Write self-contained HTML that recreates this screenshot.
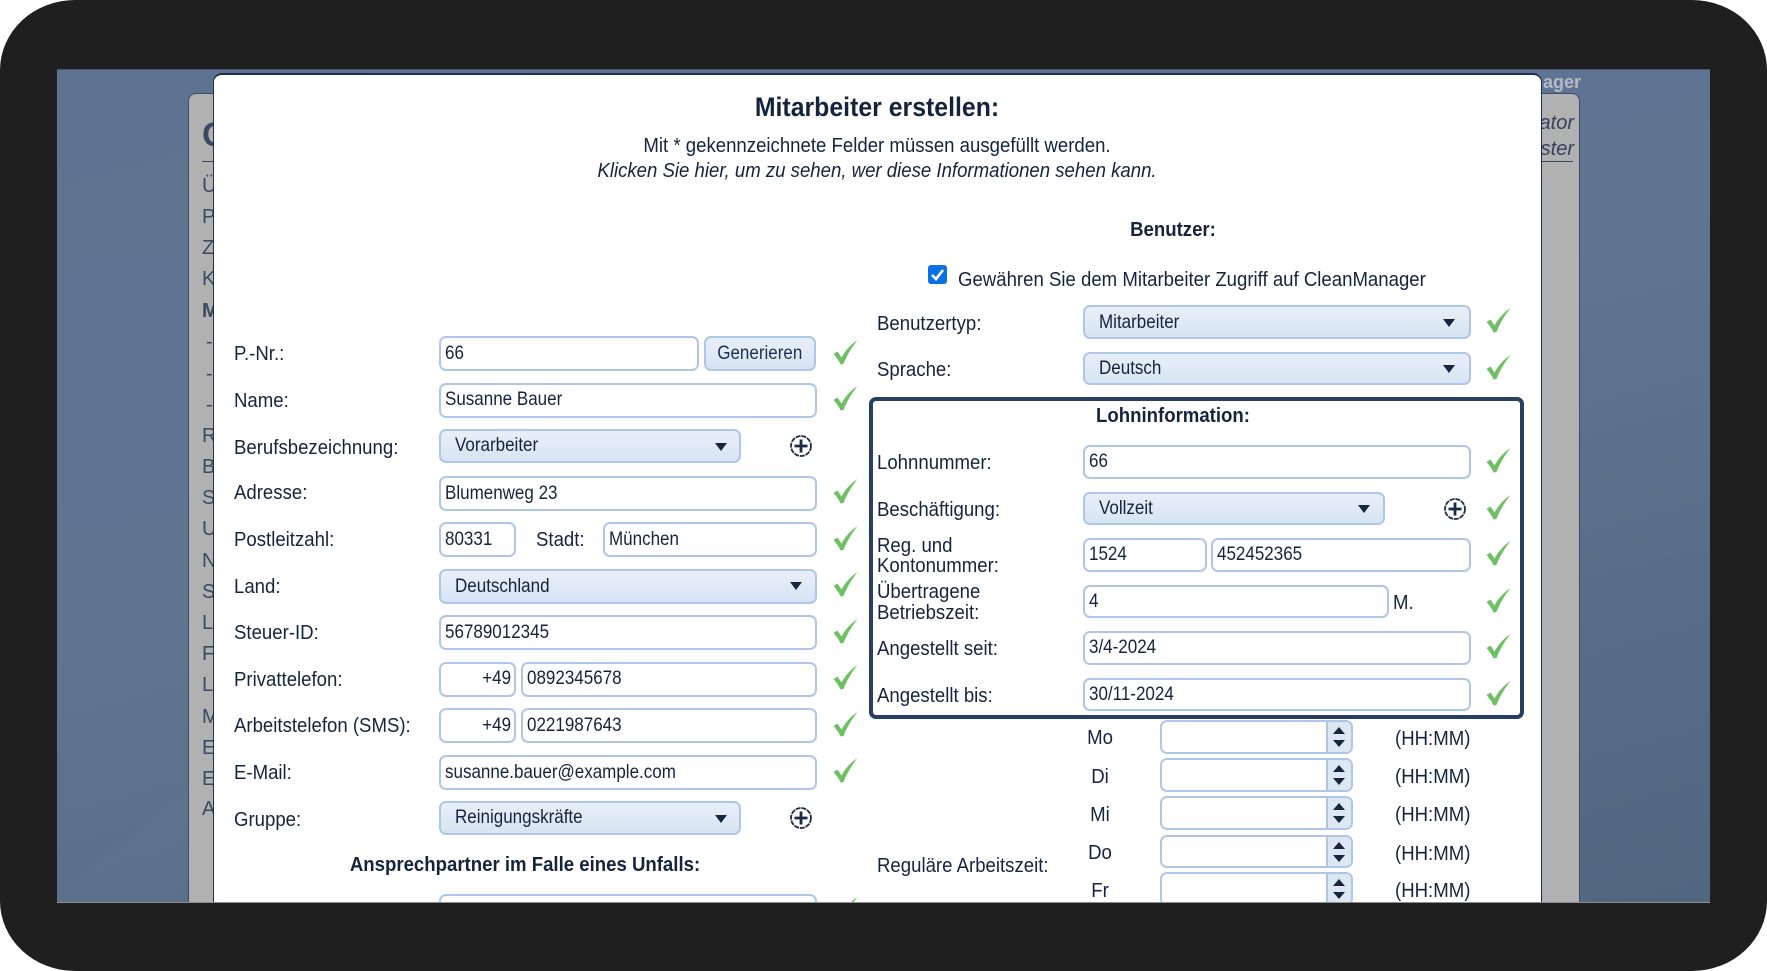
<!DOCTYPE html>
<html lang="de"><head><meta charset="utf-8"><title>Mitarbeiter erstellen</title>
<style>
html,body{margin:0;padding:0;background:#fff}
body{width:1767px;height:971px;position:relative;overflow:hidden;font-family:"Liberation Sans",Arial,sans-serif;color:#15243d}
.abs,.f,.l,.c,.p,.t,.h{position:absolute}
#frame{left:0;top:0;width:1767px;height:971px;background:#201f20;border-radius:75px/70px;position:absolute}
#clip{position:absolute;left:0;top:0;width:1767px;height:902px;overflow:hidden}
#bg{position:absolute;left:57px;top:69px;width:1653px;height:833px;background:linear-gradient(165deg,#5e7391 0%,#5f7592 45%,#51667f 100%);border-top:1px solid #4a5568;box-sizing:border-box}
#panel{position:absolute;left:188px;top:93px;width:1392px;height:820px;background:#b1b1b1;border:1px solid #3d4c66;border-radius:8px;box-sizing:border-box}
#modal{position:absolute;left:213px;top:73px;width:1329px;height:840px;background:#fff;border:1px solid #1d2f50;border-top-width:2px;border-radius:9px;box-sizing:border-box}
.b{position:absolute;left:202px;font-size:20px;color:#3b4a60;line-height:24px}
.f{box-sizing:border-box;height:35px;border:2px solid #b0c6e9;border-radius:7px;background:#fff;font-size:19.5px;line-height:31px;white-space:nowrap;overflow:hidden}
.r{height:33.5px;line-height:29px}
.s{background:linear-gradient(#e8eff9,#d8e4f2)}
.f span{display:inline-block;transform:scaleX(.872);transform-origin:0 50%;margin-left:3.5px}
.s span{margin-left:13.5px}
.s i{position:absolute;top:11.5px;width:0;height:0;border-left:6px solid transparent;border-right:6px solid transparent;border-top:8px solid #16263f}
.l{font-size:20.5px;line-height:21px;white-space:nowrap;transform:scaleX(.907);transform-origin:0 50%;margin-top:-1px}
.h{font-size:20.5px;line-height:24px;font-weight:bold;white-space:nowrap;transform:translateX(-50%) scaleX(.907)}
.t{font-size:20.5px;line-height:24px;white-space:nowrap;transform:translateX(-50%) scaleX(.907)}
svg.c{width:25px;height:25px}
svg.p{width:24px;height:24px}
.sp{position:absolute;right:0;top:0;bottom:0;width:25px;background:#dde7f4;border-left:2px solid #b0c6e9;box-sizing:border-box}
.sp:before{content:"";position:absolute;left:5px;top:5px;border-left:6px solid transparent;border-right:6px solid transparent;border-bottom:7px solid #16263f}
.sp:after{content:"";position:absolute;left:5px;top:18px;border-left:6px solid transparent;border-right:6px solid transparent;border-top:7px solid #16263f}
</style></head><body>
<svg width="0" height="0" style="position:absolute"><defs>
<symbol id="ck" viewBox="0 0 25 25"><path d="M0.5 14L4.5 11.5L8.5 17.5C12 11 17 5 24.5 0C19 7 14 15 10.5 24L7.5 24.5C6 20.5 3 17 0.5 14Z" fill="#6fc065"/></symbol>
<symbol id="pl" viewBox="0 0 24 24"><circle cx="12" cy="12" r="10" fill="#fff" stroke="#1b2b47" stroke-width="1.8" stroke-dasharray="5 .9"/><path d="M12 5.5V18.5M5.5 12H18.5" stroke="#1b2b47" stroke-width="2.8"/></symbol>
</defs></svg>
<div id="frame"></div>
<div id="clip">
<div id="bg"><svg width="1653" height="833" style="position:absolute;left:0;top:0"><path d="M0 825L131 720V833H0Z" fill="#fff" opacity=".015"/></svg></div>
<div class="abs" style="position:absolute;left:1440px;top:70px;width:141px;text-align:right;font-size:18px;line-height:24px;font-weight:bold;color:#b6bac4">Manager</div>
<div id="panel"></div>
<div class="abs" style="position:absolute;left:202px;top:161px;width:30px;height:1px;background:#3b4a60"></div>
<div class="abs" style="position:absolute;left:1500px;top:161px;width:73px;height:1px;background:#3b4a60"></div>
<div class="b" style="top:118px;font-size:34px;line-height:34px;font-weight:bold">C</div>
<div class="b" style="top:174px">Ü</div><div class="b" style="top:205px">P</div><div class="b" style="top:236px">Z</div><div class="b" style="top:267px">K</div>
<div class="b" style="top:299px;font-weight:bold">M</div>
<div class="b" style="top:330px;left:206px">-</div><div class="b" style="top:362px;left:206px">-</div><div class="b" style="top:393px;left:206px">-</div>
<div class="b" style="top:424px">R</div><div class="b" style="top:455px">B</div><div class="b" style="top:486px">S</div><div class="b" style="top:517px">U</div><div class="b" style="top:549px">N</div><div class="b" style="top:580px">S</div><div class="b" style="top:611px">L</div><div class="b" style="top:642px">F</div><div class="b" style="top:673px">L</div><div class="b" style="top:705px">M</div><div class="b" style="top:736px">E</div><div class="b" style="top:767px">E</div><div class="b" style="top:797px">A</div>
<div class="abs" style="position:absolute;left:1480px;top:111px;width:94px;text-align:right;font-size:20px;line-height:24px;font-style:italic;color:#33425a">ator</div>
<div class="abs" style="position:absolute;left:1480px;top:137px;width:94px;text-align:right;font-size:20px;line-height:24px;font-style:italic;color:#33425a">ster</div>
<div id="modal"></div>

<div class="h" style="left:877px;top:92px;font-size:27px;line-height:30px;transform:translateX(-50%) scaleX(.92)">Mitarbeiter erstellen:</div>
<div class="t" style="left:877px;top:134px">Mit * gekennzeichnete Felder müssen ausgefüllt werden.</div>
<div class="t" style="left:877px;top:159px;font-style:italic">Klicken Sie hier, um zu sehen, wer diese Informationen sehen kann.</div>

<!-- left column -->
<div class="l" style="left:233.5px;top:344px">P.-Nr.:</div>
<div class="f" style="left:439px;top:336px;width:260px"><span>66</span></div>
<div class="f s" style="left:704px;top:336px;width:112px;text-align:center"><span style="margin:0;transform-origin:50% 50%;color:#1f3050">Generieren</span></div>
<svg class="c" style="position:absolute;left:833px;top:340px"><use href="#ck"/></svg>

<div class="l" style="left:233.5px;top:391px">Name:</div>
<div class="f" style="left:439px;top:382.5px;width:378px"><span style="position:relative;top:-1px">Susanne Bauer</span></div>
<svg class="c" style="position:absolute;left:833px;top:386px"><use href="#ck"/></svg>

<div class="l" style="left:233.5px;top:437.5px">Berufsbezeichnung:</div>
<div class="f s r" style="left:439px;top:429px;width:302px"><span>Vorarbeiter</span><i style="left:274px"></i></div>
<svg class="p" style="position:absolute;left:789px;top:434px"><use href="#pl"/></svg>

<div class="l" style="left:233.5px;top:483px">Adresse:</div>
<div class="f" style="left:439px;top:475.5px;width:378px"><span>Blumenweg 23</span></div>
<svg class="c" style="position:absolute;left:833px;top:479px"><use href="#ck"/></svg>

<div class="l" style="left:233.5px;top:530px">Postleitzahl:</div>
<div class="f" style="left:439px;top:522px;width:77px"><span>80331</span></div>
<div class="l" style="left:535.5px;top:529.5px">Stadt:</div>
<div class="f" style="left:603px;top:522px;width:214px"><span>München</span></div>
<svg class="c" style="position:absolute;left:833px;top:526px"><use href="#ck"/></svg>

<div class="l" style="left:233.5px;top:577px">Land:</div>
<div class="f s" style="left:439px;top:568.5px;width:378px"><span>Deutschland</span><i style="left:349px"></i></div>
<svg class="c" style="position:absolute;left:833px;top:572px"><use href="#ck"/></svg>

<div class="l" style="left:233.5px;top:623px">Steuer-ID:</div>
<div class="f" style="left:439px;top:615px;width:378px"><span>56789012345</span></div>
<svg class="c" style="position:absolute;left:833px;top:619px"><use href="#ck"/></svg>

<div class="l" style="left:233.5px;top:670px">Privattelefon:</div>
<div class="f" style="left:439px;top:661.5px;width:77px;text-align:right"><span style="margin:0 3px 0 0;transform-origin:100% 50%;position:relative;top:-1px">+49</span></div>
<div class="f" style="left:521px;top:661.5px;width:296px"><span style="position:relative;top:-1px">0892345678</span></div>
<svg class="c" style="position:absolute;left:833px;top:665px"><use href="#ck"/></svg>

<div class="l" style="left:233.5px;top:716px">Arbeitstelefon (SMS):</div>
<div class="f" style="left:439px;top:708px;width:77px;text-align:right"><span style="margin:0 3px 0 0;transform-origin:100% 50%">+49</span></div>
<div class="f" style="left:521px;top:708px;width:296px"><span>0221987643</span></div>
<svg class="c" style="position:absolute;left:833px;top:712px"><use href="#ck"/></svg>

<div class="l" style="left:233.5px;top:763px">E-Mail:</div>
<div class="f" style="left:439px;top:754.5px;width:378px"><span>susanne.bauer@example.com</span></div>
<svg class="c" style="position:absolute;left:833px;top:758px"><use href="#ck"/></svg>

<div class="l" style="left:233.5px;top:810px">Gruppe:</div>
<div class="f s r" style="left:439px;top:801px;width:302px"><span>Reinigungskräfte</span><i style="left:274px"></i></div>
<svg class="p" style="position:absolute;left:789px;top:806px"><use href="#pl"/></svg>

<div class="h" style="left:525px;top:853px">Ansprechpartner im Falle eines Unfalls:</div>
<div class="f" style="left:439px;top:894px;width:378px"></div>
<svg class="c" style="position:absolute;left:833px;top:897px"><use href="#ck"/></svg>

<!-- right column -->
<div class="h" style="left:1173px;top:218px">Benutzer:</div>
<svg style="position:absolute;left:928px;top:265px" width="19" height="19"><rect width="19" height="19" rx="3" fill="#0b6fe6"/><path d="M4 10L8 14L15 5" fill="none" stroke="#fff" stroke-width="2.6"/></svg>
<div class="l" style="left:958px;top:270px">Gewähren Sie dem Mitarbeiter Zugriff auf CleanManager</div>

<div class="l" style="left:876.5px;top:314px">Benutzertyp:</div>
<div class="f s r" style="left:1083px;top:305px;width:388px"><span style="position:relative;top:1px">Mitarbeiter</span><i style="left:358px"></i></div>
<svg class="c" style="position:absolute;left:1486px;top:308px"><use href="#ck"/></svg>

<div class="l" style="left:876.5px;top:360px">Sprache:</div>
<div class="f s r" style="left:1083px;top:351.5px;width:388px"><span>Deutsch</span><i style="left:358px"></i></div>
<svg class="c" style="position:absolute;left:1486px;top:355px"><use href="#ck"/></svg>

<div class="abs" style="position:absolute;left:869px;top:397px;width:655px;height:322px;border:4px solid #28405f;border-radius:7px;box-sizing:border-box"></div>
<div class="h" style="left:1173px;top:404px">Lohninformation:</div>

<div class="l" style="left:876.5px;top:453px">Lohnnummer:</div>
<div class="f r" style="left:1083px;top:445px;width:388px"><span>66</span></div>
<svg class="c" style="position:absolute;left:1486px;top:448px"><use href="#ck"/></svg>

<div class="l" style="left:876.5px;top:500px">Beschäftigung:</div>
<div class="f s r" style="left:1083px;top:491.5px;width:302px"><span>Vollzeit</span><i style="left:273px"></i></div>
<svg class="p" style="position:absolute;left:1443px;top:497px"><use href="#pl"/></svg>
<svg class="c" style="position:absolute;left:1486px;top:495px"><use href="#ck"/></svg>

<div class="l" style="left:876.5px;top:535.5px">Reg. und</div>
<div class="l" style="left:876.5px;top:556px">Kontonummer:</div>
<div class="f r" style="left:1083px;top:538px;width:124px"><span>1524</span></div>
<div class="f r" style="left:1211px;top:538px;width:260px"><span>452452365</span></div>
<svg class="c" style="position:absolute;left:1486px;top:541px"><use href="#ck"/></svg>

<div class="l" style="left:876.5px;top:582px">Übertragene</div>
<div class="l" style="left:876.5px;top:602.5px">Betriebszeit:</div>
<div class="f r" style="left:1083px;top:584.5px;width:306px"><span>4</span></div>
<div class="l" style="left:1393px;top:593px">M.</div>
<svg class="c" style="position:absolute;left:1486px;top:588px"><use href="#ck"/></svg>

<div class="l" style="left:876.5px;top:639px">Angestellt seit:</div>
<div class="f r" style="left:1083px;top:631px;width:388px"><span>3/4-2024</span></div>
<svg class="c" style="position:absolute;left:1486px;top:634px"><use href="#ck"/></svg>

<div class="l" style="left:876.5px;top:686px">Angestellt bis:</div>
<div class="f r" style="left:1083px;top:677.5px;width:388px"><span>30/11-2024</span></div>
<svg class="c" style="position:absolute;left:1486px;top:681px"><use href="#ck"/></svg>

<div class="t" style="left:1100px;top:726px">Mo</div>
<div class="f r" style="left:1160px;top:720px;width:193px"><div class="sp"></div></div>
<div class="l" style="left:1395px;top:729px">(HH:MM)</div>
<div class="t" style="left:1100px;top:765px">Di</div>
<div class="f r" style="left:1160px;top:758px;width:193px"><div class="sp"></div></div>
<div class="l" style="left:1395px;top:767px">(HH:MM)</div>
<div class="t" style="left:1100px;top:803px">Mi</div>
<div class="f r" style="left:1160px;top:796px;width:193px"><div class="sp"></div></div>
<div class="l" style="left:1395px;top:805px">(HH:MM)</div>
<div class="t" style="left:1100px;top:841px">Do</div>
<div class="f r" style="left:1160px;top:834.5px;width:193px"><div class="sp"></div></div>
<div class="l" style="left:1395px;top:844px">(HH:MM)</div>
<div class="t" style="left:1100px;top:879px">Fr</div>
<div class="f r" style="left:1160px;top:872px;width:193px"><div class="sp"></div></div>
<div class="l" style="left:1395px;top:881px">(HH:MM)</div>
<div class="l" style="left:876.5px;top:856px">Reguläre Arbeitszeit:</div>
</div>
<div style="position:absolute;left:57px;top:902px;width:1653px;height:1px;background:#8d8d8d"></div>
</body></html>
